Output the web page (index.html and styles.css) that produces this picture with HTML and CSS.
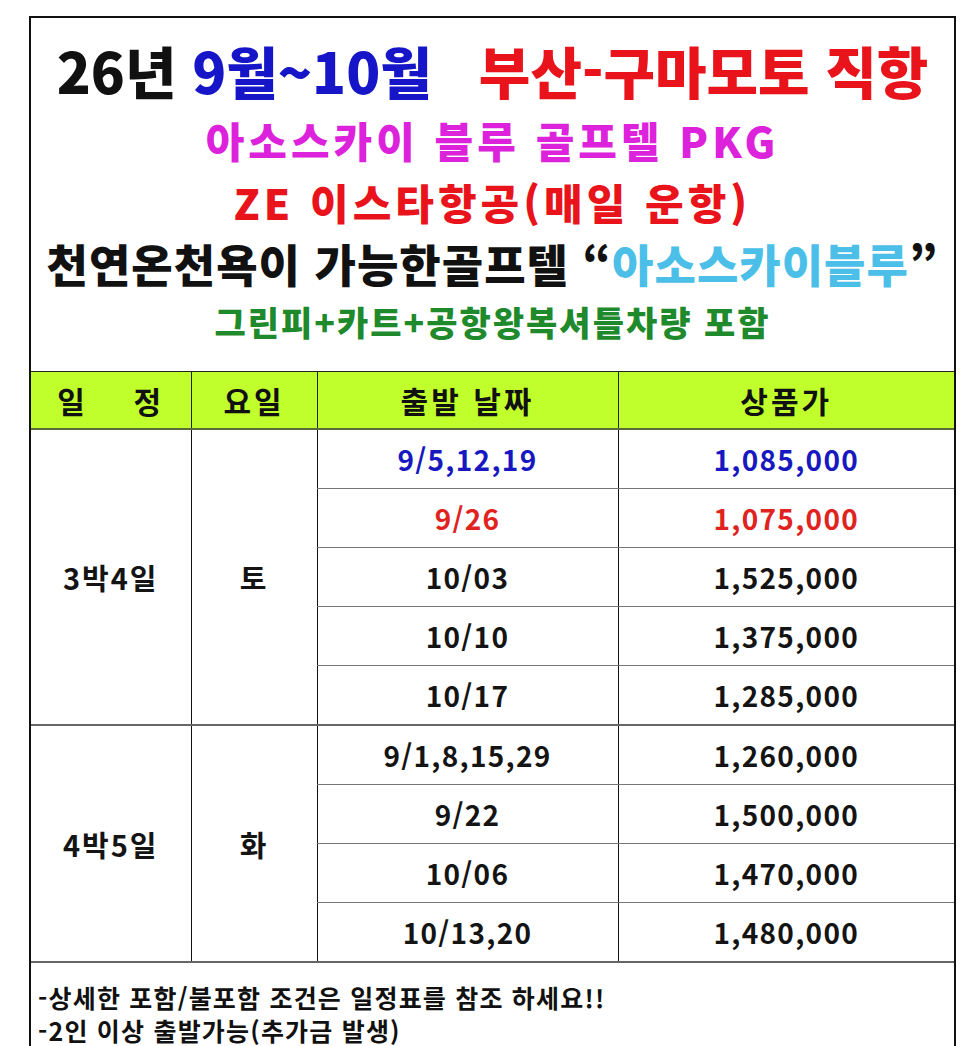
FILE: index.html
```html
<!DOCTYPE html>
<html lang="ko">
<head>
<meta charset="utf-8">
<link rel="stylesheet" href="styles.css">
</head>
<body>
<div class="sheet">
  <header class="intro">
    <div class="line l1"><span class="k">26년</span> <span class="b">9월~10월</span>&nbsp;&nbsp; <span class="r">부산-구마모토 직항</span></div>
    <div class="line l2">아소스카이 블루 골프텔 PKG</div>
    <div class="line l3">ZE 이스타항공(매일 운항)</div>
    <div class="line l4">천연온천욕이 가능한골프텔 “<span class="sky">아소스카이블루</span>”</div>
    <div class="line l5">그린피+카트+공항왕복셔틀차량 포함</div>
  </header>
  <table class="price">
    <colgroup>
      <col class="c1"><col class="c2"><col class="c3"><col class="c4">
    </colgroup>
    <thead>
      <tr><th>일&nbsp;&nbsp;&nbsp;&nbsp;정</th><th>요일</th><th>출발 날짜</th><th>상품가</th></tr>
    </thead>
    <tbody>
      <tr><td class="grp" rowspan="5">3박4일</td><td class="grp" rowspan="5">토</td><td class="blue">9/5,12,19</td><td class="blue">1,085,000</td></tr>
      <tr><td class="red">9/26</td><td class="red">1,075,000</td></tr>
      <tr><td>10/03</td><td>1,525,000</td></tr>
      <tr><td>10/10</td><td>1,375,000</td></tr>
      <tr class="last"><td>10/17</td><td>1,285,000</td></tr>
      <tr><td class="grp" rowspan="4">4박5일</td><td class="grp" rowspan="4">화</td><td>9/1,8,15,29</td><td>1,260,000</td></tr>
      <tr><td>9/22</td><td>1,500,000</td></tr>
      <tr><td>10/06</td><td>1,470,000</td></tr>
      <tr class="last"><td>10/13,20</td><td>1,480,000</td></tr>
    </tbody>
  </table>
  <div class="notes">
    <p>-상세한 포함/불포함 조건은 일정표를 참조 하세요!!</p>
    <p>-2인 이상 출발가능(추가금 발생)</p>
  </div>
</div>
</body>
</html>
```
FILE: styles.css
```css
html, body {
  margin: 0;
  padding: 0;
  background: #fff;
}
body {
  font-family: "Noto Sans CJK KR", "Noto Sans", sans-serif;
  color: #111;
}
.sheet {
  margin: 16px 0 0 29px;
  width: 927px;
  box-sizing: border-box;
  border-top: 2px solid #111;
  border-left: 2px solid #111;
  border-right: 2px solid #111;
  height: 1040px;
}
.intro {
  display: flex;
  flex-direction: column;
  align-items: center;
  padding-top: 22px;
  height: 354px;
  box-sizing: border-box;
  border-bottom: 1px solid #222;
}
.line {
  font-weight: 900;
  white-space: nowrap;
  text-align: center;
  height: 60px;
  line-height: 60px;
  margin-top: 2px;
}
.l1 {
  font-size: 56px;
  letter-spacing: 0;
  margin-top: 0;
  margin-bottom: 8px;
}
.l1 .b { color: #1616c8; }
.l1 .r { color: #e8131b; }
.l2 {
  font-size: 42px;
  color: #dd22dc;
  letter-spacing: 4px;
}
.l3 {
  font-size: 42px;
  color: #e8131b;
  letter-spacing: 4px;
}
.l4 {
  font-size: 45px;
  color: #111;
  letter-spacing: 1px;
}
.l4 .sky { color: #4bbfe8; }
.l5 {
  font-size: 34px;
  color: #1f8a2c;
  letter-spacing: 2px;
  height: 56px;
  line-height: 56px;
  margin-top: 0;
}
.price {
  width: 100%;
  border-collapse: collapse;
  table-layout: fixed;
}
.c1 { width: 160px; }
.c2 { width: 126px; }
.c3 { width: 301px; }
.c4 { width: auto; }
.price th {
  background: #c0ff2b;
  height: 56px;
  font-size: 30px;
  font-weight: 700;
  letter-spacing: 3px;
  color: #111;
  border-bottom: 2px solid #5a6a3a;
  border-left: 1.5px solid #222;
  padding: 0;
}
.price th:first-child,
.price td.grp:first-child { border-left: none; }
.price td {
  height: 58px;
  padding: 0;
  text-align: center;
  font-size: 28px;
  font-weight: 700;
  letter-spacing: 1.3px;
  color: #141414;
  border-left: 1.5px solid #111;
  border-bottom: 1px solid #777;
}
.price td.grp {
  border-bottom: 2px solid #666;
  font-size: 29px;
  letter-spacing: 2px;
}
.price tr.last td {
  border-bottom: 2px solid #666;
}
.price td.blue { color: #1818c0; }
.price td.red { color: #e0231e; }
.notes {
  padding: 18px 0 0 7px;
}
.notes p {
  margin: 0;
  font-size: 25px;
  font-weight: 700;
  line-height: 33px;
  letter-spacing: 1.2px;
}
```
